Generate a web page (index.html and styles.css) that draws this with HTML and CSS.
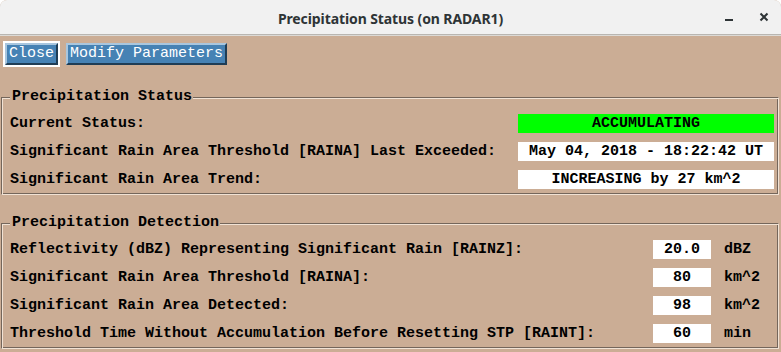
FILE: index.html
```html
<!DOCTYPE html>
<html>
<head>
<meta charset="utf-8">
<title>Precipitation Status (on RADAR1)</title>
<link rel="stylesheet" href="styles.css">
</head>
<body>
<div class="window">
  <header class="titlebar">
    <span class="title">Precipitation Status (on RADAR1)</span>
    <div class="controls">
      <svg class="ctl-min" width="10" height="10" viewBox="0 0 10 10"><rect x="1" y="7" width="8" height="2" fill="#2e3436"/></svg>
      <svg class="ctl-close" width="10" height="10" viewBox="0 0 10 10"><path d="M1.5 1.5 L8.5 8.5 M8.5 1.5 L1.5 8.5" stroke="#2e3436" stroke-width="2" fill="none"/></svg>
    </div>
  </header>
  <main class="content">
    <div class="toolbar">
      <span class="focus-ring"><button class="btn">Close</button></span>
      <button class="btn">Modify Parameters</button>
    </div>

    <fieldset class="frame">
      <legend>Precipitation Status</legend>
      <div class="grid grid-status">
        <span class="label">Current Status:</span>
        <span class="box box-green">ACCUMULATING</span>
        <span class="label">Significant Rain Area Threshold [RAINA] Last Exceeded:</span>
        <span class="box">May 04, 2018 - 18:22:42 UT</span>
        <span class="label">Significant Rain Area Trend:</span>
        <span class="box">INCREASING by 27 km^2</span>
      </div>
    </fieldset>

    <fieldset class="frame frame-detect">
      <legend>Precipitation Detection</legend>
      <div class="grid grid-detect">
        <span class="label">Reflectivity (dBZ) Representing Significant Rain [RAINZ]:</span>
        <span class="box">20.0</span>
        <span class="unit">dBZ</span>
        <span class="label">Significant Rain Area Threshold [RAINA]:</span>
        <span class="box">80</span>
        <span class="unit">km^2</span>
        <span class="label">Significant Rain Area Detected:</span>
        <span class="box">98</span>
        <span class="unit">km^2</span>
        <span class="label">Threshold Time Without Accumulation Before Resetting STP [RAINT]:</span>
        <span class="box">60</span>
        <span class="unit">min</span>
      </div>
    </fieldset>
  </main>
</div>
</body>
</html>
```

FILE: styles.css
```css
html, body {
  margin: 0;
  padding: 0;
  background: #ffffff;
}

.window {
  width: 781px;
  height: 352px;
  background: #cbad95;
  overflow: hidden;
  border-radius: 7px 7px 0 0;
  display: flex;
  flex-direction: column;
}

.titlebar {
  height: 34px;
  flex: 0 0 34px;
  background: #f1f1f1;
  border-bottom: 1px solid #b9b6b1;
  box-shadow: 0 1px 0 #dcdad6;
  display: flex;
  align-items: center;
  justify-content: center;
  position: relative;
  font-family: "Noto Sans", "DejaVu Sans", sans-serif;
  font-weight: 700;
  font-size: 14px;
  color: #2e3436;
}

.title {
  padding-top: 2px;
  letter-spacing: -0.1px;
}

.controls {
  position: absolute;
  right: 12px;
  top: 12px;
  display: flex;
  gap: 25px;
}

.content {
  flex: 1;
  padding: 5px 2px 0 1px;
  display: flex;
  flex-direction: column;
  font-family: "Liberation Mono", "Courier New", monospace;
  font-size: 15px;
  color: #000;
  margin-top: 1px;
}

.toolbar {
  display: flex;
  align-items: center;
  gap: 6px;
  padding-left: 2px;
  height: 26px;
}

.focus-ring {
  display: flex;
  border: 2px solid #ffffff;
}

.btn {
  font-family: "Liberation Mono", "Courier New", monospace;
  font-size: 15px;
  font-weight: 400;
  line-height: 18px;
  height: 22px;
  padding: 0 2px;
  margin: 0;
  color: #ffffff;
  background: #4682b4;
  border: 2px solid;
  border-color: #a9c6de #1f3d55 #1f3d55 #a9c6de;
}

.frame {
  margin: 21px 0 0 0;
  padding: 0 4px 5px 8px;
  border: 1px solid;
  border-color: #74665b #f1e2d4 #f1e2d4 #74665b;
  box-shadow: inset 1px 1px 0 #f1e2d4, inset -1px -1px 0 #74665b;
  min-width: 0;
}

.frame-detect {
  margin-top: 19px;
}

.frame legend {
  padding: 0 1px 0 2px;
  margin-left: 0;
  font-weight: 700;
  line-height: 18px;
  background: #cbad95;
}

.grid {
  display: grid;
  row-gap: 9px;
  padding-top: 8px;
  align-items: center;
}

.grid-status {
  grid-template-columns: 1fr 256px;
}

.grid-detect {
  grid-template-columns: 1fr 58px 50px;
  column-gap: 13px;
}

.label, .unit {
  font-weight: 700;
  line-height: 19px;
  white-space: pre;
}

.box {
  display: block;
  height: 19px;
  line-height: 19px;
  background: #ffffff;
  text-align: center;
  font-weight: 700;
  white-space: pre;
}

.box-green {
  background: #00ff00;
}
```
